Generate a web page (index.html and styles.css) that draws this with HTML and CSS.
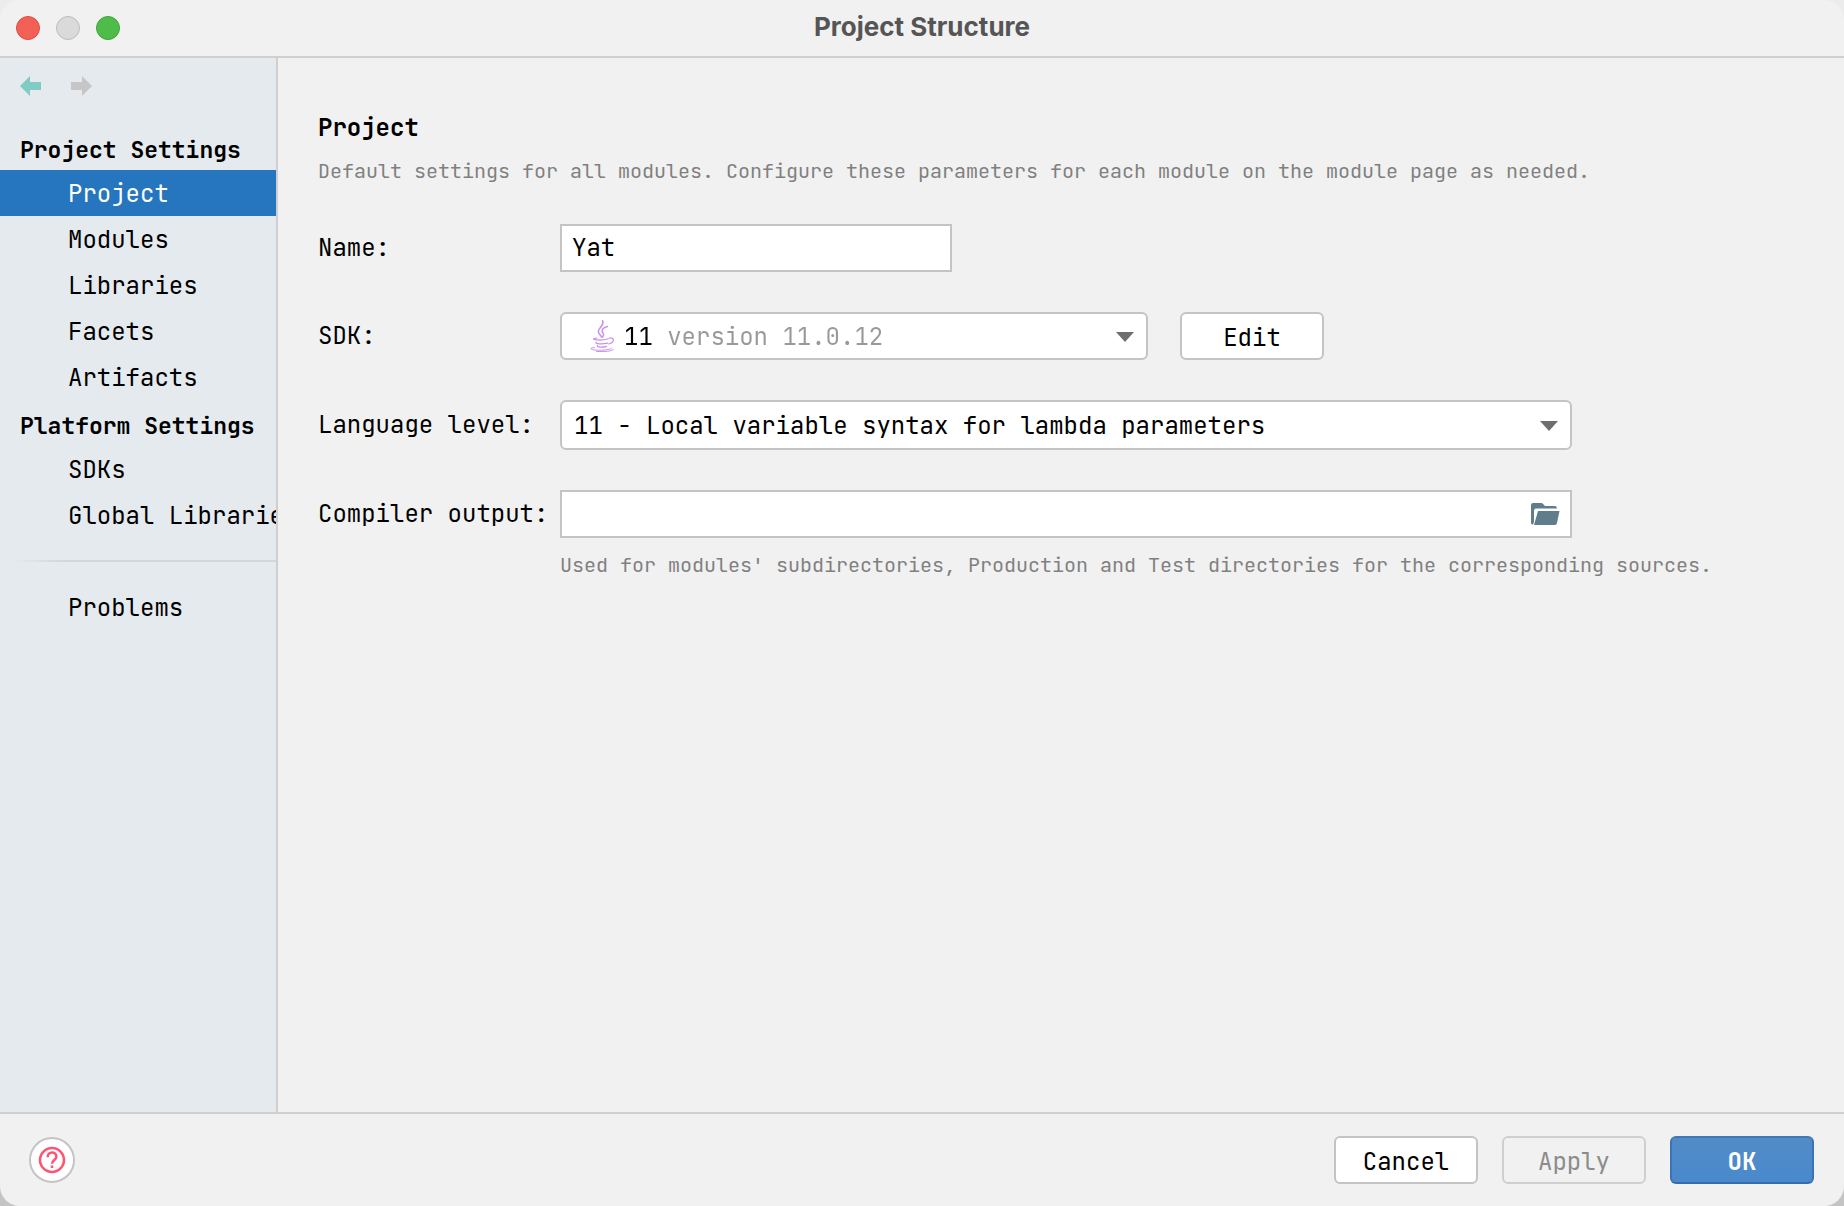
FILE: index.html
```html
<!DOCTYPE html>
<html lang="en">
<head>
<meta charset="utf-8">
<title>Project Structure</title>
<link rel="stylesheet" href="styles.css">
</head>
<body>
<div class="window">
  <header class="titlebar">
    <div class="lights">
      <button class="light light-close" type="button" aria-label="Close"></button>
      <button class="light light-min" type="button" aria-label="Minimize" disabled></button>
      <button class="light light-zoom" type="button" aria-label="Zoom"></button>
    </div>
    <h1 class="title">Project Structure</h1>
  </header>

  <div class="body">
    <aside class="sidebar">
      <div class="history">
        <button class="nav-button" type="button" aria-label="Back">
          <svg width="22" height="20" viewBox="0 0 22 20"><path fill="#80cbc4" d="M0 10 10 0v6h11v8H10v6z"/></svg>
        </button>
        <button class="nav-button" type="button" aria-label="Forward" disabled>
          <svg width="22" height="20" viewBox="0 0 22 20"><path fill="#c6c6c6" d="M21 10 11 0v6H0v8h11v6z"/></svg>
        </button>
      </div>
      <nav>
        <h2 class="group">Project Settings</h2>
        <a class="item selected" href="#project">Project</a>
        <a class="item" href="#modules">Modules</a>
        <a class="item" href="#libraries">Libraries</a>
        <a class="item" href="#facets">Facets</a>
        <a class="item" href="#artifacts">Artifacts</a>
        <h2 class="group">Platform Settings</h2>
        <a class="item" href="#sdks">SDKs</a>
        <a class="item" href="#global">Global Libraries</a>
        <hr class="separator">
        <a class="item" href="#problems">Problems</a>
      </nav>
    </aside>

    <main class="content">
      <h2 class="heading">Project</h2>
      <p class="hint">Default settings for all modules. Configure these parameters for each module on the module page as needed.</p>

      <form class="form">
        <label for="name">Name:</label>
        <input class="field field-name" id="name" type="text" value="Yat">

        <label for="sdk">SDK:</label>
        <div class="sdk-row">
          <div class="combo combo-sdk">
            <svg class="java" width="24" height="32" viewBox="0 0 24 32" fill="none" stroke="#c792ea" stroke-linecap="round">
              <path stroke-width="1.6" d="M12.600 .8C15 5 8.300 7.500 8.300 11.500C8.300 14 11.500 15.500 11.800 17.500"/>
              <path stroke-width="1.500" d="M17.500 6.500C14 7.500 11.800 9.500 12.200 11.500C12.500 13.200 15 14 12.800 16.800"/>
              <path stroke-width="1.200" d="M7 18C3.500 18.300 2.500 19.300 5 19.700C9 20.300 15 20 18.500 18.800M19.500 18C25 17.300 24.500 22.500 18.800 24"/>
              <path stroke-width="1.300" d="M6.200 22.300C5 24 12 24.500 17.500 23.200M7.500 25.600C6.500 27.300 12 27.700 16.500 26.300"/>
              <path stroke-width="1" d="M4.500 27.500C0 27.700-.5 29.300 4 29.900C9.500 30.600 19.500 30.200 21.500 28.300M6.500 31.400C14 32 22.500 31.300 23.500 29.300"/>
            </svg>
            <select class="sdk-select" id="sdk"><option>11 version 11.0.12</option></select>
            <svg class="caret" width="18" height="10" viewBox="0 0 18 10"><path fill="#6e6e6e" d="M0 0h18L9 10z"/></svg>
          </div>
          <button class="button" type="button">Edit</button>
        </div>

        <label for="level">Language level:</label>
        <div class="combo combo-level">
          <select class="level-select" id="level"><option>11 - Local variable syntax for lambda parameters</option></select>
          <svg class="caret" width="18" height="10" viewBox="0 0 18 10"><path fill="#6e6e6e" d="M0 0h18L9 10z"/></svg>
        </div>

        <label for="output">Compiler output:</label>
        <div class="path-field">
          <input class="path-input" id="output" type="text">
          <button class="browse" type="button" aria-label="Browse">
            <svg width="29" height="22" viewBox="0 0 29 22" fill="#607d8b"><path d="M0 20V2Q0 0 2 0H10Q12 0 13 2L14 3H24Q26 3 26 5.500H5Q3 5.500 3 8V19L2 21.500Q0 21.500 0 20z"/><path d="M7 8H28.500L26 20Q25.500 22 24 22H3z"/></svg>
          </button>
        </div>

        <p class="hint hint-output">Used for modules' subdirectories, Production and Test directories for the corresponding sources.</p>
      </form>
    </main>
  </div>

  <footer class="footer">
    <button class="help" type="button" aria-label="Help">
      <svg width="28" height="28" viewBox="0 0 28 28" fill="none" stroke="#ff5370" stroke-width="2.500"><circle cx="14" cy="14" r="12"/><path d="M9.600 11.200C9.600 4.800 18.400 5 18.400 10.700C18.400 13.800 14 14.200 14 17.800"/><path d="M14 19.600v2.500"/></svg>
    </button>
    <div class="actions">
      <button class="button" type="button">Cancel</button>
      <button class="button" type="button" disabled>Apply</button>
      <button class="button primary" type="submit">OK</button>
    </div>
  </footer>
</div>
</body>
</html>
```
FILE: styles.css
```css
* {
  box-sizing: border-box;
}

body {
  margin: 0;
  background: linear-gradient(#ececec, #c4c4c4);
  color: #000;
  font-family: "JetBrains Mono", "DejaVu Sans Mono", monospace;
  font-size: 24px;
  line-height: 46px;
}

h1, h2, p {
  margin: 0;
}

button, input, select {
  margin: 0;
  padding: 0;
  border: 0;
  background: none;
  color: inherit;
  font: inherit;
}

svg {
  display: block;
}

.window {
  display: flex;
  flex-direction: column;
  min-height: 100vh;
  overflow: hidden;
  border-radius: 20px;
  background: #f1f1f1;
}

.titlebar {
  display: grid;
  grid-template-columns: 1fr auto 1fr;
  align-items: center;
  height: 58px;
  padding: 0 16px;
  border-bottom: 2px solid #cfcfcf;
}

.lights {
  display: flex;
  gap: 16px;
}

.light {
  width: 24px;
  height: 24px;
  border: 1px solid;
  border-radius: 50%;
}

.light-close {
  background: #f36156;
  border-color: #d94f45;
}

.light-min {
  background: #dadada;
  border-color: #bcbcbc;
}

.light-zoom {
  background: #4fbc49;
  border-color: #42a33c;
}

.title {
  color: #555;
  font-family: Inter, sans-serif;
  font-size: 26px;
  font-weight: 700;
  line-height: 54px;
  padding-bottom: 2px;
}

.body {
  display: flex;
  flex: 1;
}

.sidebar {
  flex: none;
  width: 278px;
  overflow: hidden;
  border-right: 2px solid #cfcfcf;
  background: #e5eaee;
}

.history {
  display: flex;
  gap: 29px;
  height: 66px;
  padding: 18px 20px;
}

.nav-button {
  height: 20px;
}

.group {
  height: 46px;
  padding: 4px 0 0 20px;
  font-size: 23px;
  line-height: 44px;
  white-space: nowrap;
}

.item {
  display: block;
  height: 46px;
  padding-left: 68px;
  color: inherit;
  line-height: 48px;
  text-decoration: none;
  white-space: nowrap;
}

.selected {
  background: #2675bf;
  color: #fff;
}

.separator {
  height: 2px;
  margin: 22px 0 22px 14px;
  border: 0;
  background: linear-gradient(90deg, #e5eaee, #d4d6d8 50px);
}

.content {
  flex: 1;
  padding: 46px 40px;
}

.heading {
  font-size: 24px;
  line-height: 48px;
}

.hint {
  color: #808080;
  font-size: 20px;
  line-height: 38px;
}

.form {
  display: grid;
  grid-template-columns: 242px minmax(0, 1012px);
  align-items: center;
  row-gap: 40px;
  margin-top: 34px;
  white-space: nowrap;
}

.field,
.path-field {
  height: 48px;
  border: 2px solid #c4c4c4;
  background: #fff;
}

.field {
  padding: 0 10px 2px;
}

.field-name {
  width: 392px;
}

.sdk-row {
  display: flex;
  gap: 32px;
}

.combo {
  display: flex;
  align-items: center;
  height: 48px;
  padding-right: 12px;
  border: 2px solid #c4c4c4;
  border-radius: 6px;
  background: #fff;
}

.combo-sdk {
  flex: 0 1 588px;
  gap: 10px;
  padding-left: 28px;
}

.combo-level {
  height: 50px;
  padding-left: 12px;
}

.combo select {
  flex: 1;
  min-width: 0;
  height: 44px;
  appearance: none;
  outline: 0;
}

.combo .sdk-select {
  padding-bottom: 2px;
  color: #999;
  background: linear-gradient(90deg, #000 36px, #999 36px);
  background-clip: text;
  -webkit-text-fill-color: transparent;
}

.caret {
  margin-top: 2px;
}

.button {
  width: 144px;
  height: 48px;
  padding-top: 3px;
  border: 2px solid #c4c4c4;
  border-radius: 6px;
  background: #fff;
  line-height: 41px;
}

.button:disabled {
  border-color: #cfcfcf;
  background: #f1f1f1;
  color: #8c8c8c;
}

.primary {
  border-color: #4079b8 #3a74b5 #346daf;
  background: linear-gradient(#528cc7, #4989cc);
  color: #fff;
  font-weight: 700;
}

.path-field {
  display: flex;
  align-items: center;
  padding-right: 10px;
}

.path-input {
  flex: 1;
  height: 44px;
  padding: 0 10px;
}

.hint-output {
  grid-column: 2;
  margin-top: -32px;
}

.footer {
  display: flex;
  align-items: center;
  justify-content: space-between;
  height: 94px;
  padding: 0 30px 0 29px;
  border-top: 2px solid #cfcfcf;
}

.help {
  display: grid;
  place-items: center;
  width: 46px;
  height: 46px;
  border: 2px solid #c4c4c4;
  border-radius: 50%;
  background: #fff;
}

.actions {
  display: flex;
  gap: 24px;
}
```
